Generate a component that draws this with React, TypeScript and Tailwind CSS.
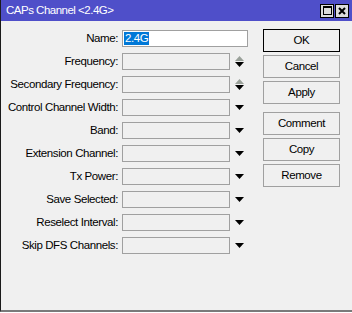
import React from 'react'

const DownArrow = () => (
  <svg width="9" height="5" viewBox="0 0 9 5">
    <polygon points="0,0 9,0 4.5,5" fill="#000" />
  </svg>
)

const SpinArrows = () => (
  <div className="flex flex-col items-center gap-[1px]">
    <svg width="9" height="5" viewBox="0 0 9 5">
      <polygon points="0,5 9,5 4.5,0" fill="#9aa19a" />
    </svg>
    <svg width="9" height="5" viewBox="0 0 9 5">
      <polygon points="0,0 9,0 4.5,5" fill="#000" />
    </svg>
  </div>
)

interface FieldRowProps {
  label: string
  spin?: boolean
}

const FieldRow = ({ label, spin }: FieldRowProps) => (
  <div className="flex items-center h-[17px]">
    <div className="w-[118px] text-right pr-[1px] whitespace-nowrap">{label}:</div>
    <div className="ml-[3px] w-[108px] h-[17px] border border-[#a0a0a0] bg-[#f0f0f0]" />
    <div className="w-[18px] flex justify-center pl-[1px]">
      {spin ? <SpinArrows /> : <DownArrow />}
    </div>
  </div>
)

const Button = ({ label, primary }: { label: string; primary?: boolean }) => (
  <div
    className={
      'w-[77px] h-[23px] flex items-center justify-center bg-[#f0f0f0] border ' +
      (primary ? 'border-black' : 'border-[#a0a0a0]')
    }
  >
    {label}
  </div>
)

const App = () => {
  const rows: FieldRowProps[] = [
    { label: 'Frequency', spin: true },
    { label: 'Secondary Frequency', spin: true },
    { label: 'Control Channel Width' },
    { label: 'Band' },
    { label: 'Extension Channel' },
    { label: 'Tx Power' },
    { label: 'Save Selected' },
    { label: 'Reselect Interval' },
    { label: 'Skip DFS Channels' },
  ]

  return (
    <div
      className="w-[352px] h-[313px] bg-white text-[11.5px] tracking-[-0.4px] text-black overflow-hidden"
      style={{ fontFamily: '"Liberation Sans", Arial, sans-serif' }}
    >
      <div className="h-[312px] border-l border-b-2 border-l-[#1a1a1a] border-b-[#7a7a7a] bg-[#f0f0f0] flex flex-col">
        <div className="h-[21px] bg-[#4f4fc9] flex items-center pl-[5px] pr-[3px]">
          <span className="text-white text-[11.5px] tracking-[-0.5px] flex-1">CAPs Channel &lt;2.4G&gt;</span>
          <div className="flex gap-[1px]">
            <div className="w-[14px] h-[14px] bg-[#dcdcdc] border border-black flex items-center justify-center">
              <div className="w-[9px] h-[9px] border border-black border-t-2" />
            </div>
            <div className="w-[14px] h-[14px] bg-[#dcdcdc] border border-black flex items-center justify-center">
              <svg width="8" height="8" viewBox="0 0 8 8">
                <path d="M1 1 L7 7 M7 1 L1 7" stroke="#000" strokeWidth="2" />
              </svg>
            </div>
          </div>
        </div>

        <div className="flex pt-[7px]">
          <div className="flex flex-col gap-[6px] pt-[2px]">
            <div className="flex items-center h-[17px]">
              <div className="w-[118px] text-right pr-[1px]">Name:</div>
              <div className="ml-[3px] w-[126px] h-[17px] border border-[#a0a0a0] bg-white flex items-center pl-[1px]">
                <span className="bg-[#0078d7] text-white leading-[13px] px-[1px]">2.4G</span>
              </div>
            </div>
            {rows.map((r, i) => (
              <FieldRow key={i} {...r} />
            ))}
          </div>

          <div className="ml-[15px] pt-[1px] flex flex-col gap-[3px]">
            <Button label="OK" primary />
            <Button label="Cancel" />
            <Button label="Apply" />
            <div className="h-[2px]" />
            <Button label="Comment" />
            <Button label="Copy" />
            <Button label="Remove" />
          </div>
        </div>
      </div>
    </div>
  )
}

export default App
